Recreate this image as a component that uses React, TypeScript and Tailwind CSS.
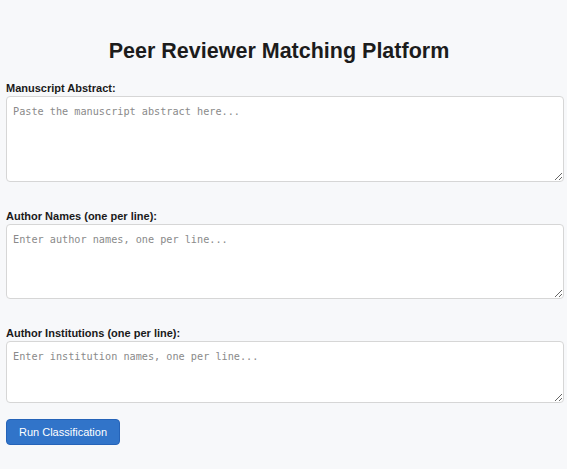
export default function App() {
  const mono = { fontFamily: '"DejaVu Sans Mono", "Liberation Mono", monospace' };
  return (
    <div className="min-h-[469px] w-full bg-[#f7f8fa] text-[#1a1a1a]" style={{ fontFamily: '"Liberation Sans", Arial, sans-serif' }}>
      <div className="pl-[6px] pr-[3px] pt-[37px]">
        <h1 className="pr-[12px] text-center text-[21.5px] font-bold leading-[28px] text-[#1c1c1c]">Peer Reviewer Matching Platform</h1>
        <label className="mt-[17px] block text-[11px] font-bold leading-[13px]">Manuscript Abstract:</label>
        <textarea
          className="mt-[1px] block h-[86px] w-full rounded-[4px] border border-[#d6d6d6] bg-white px-[6px] py-[7px] text-[10.2px] placeholder:text-[#8a8a8a]"
          style={mono}
          placeholder="Paste the manuscript abstract here..."
        />
        <label className="mt-[28px] block text-[11px] font-bold leading-[13px]">Author Names (one per line):</label>
        <textarea
          className="mt-[1px] block h-[75px] w-full rounded-[4px] border border-[#d6d6d6] bg-white px-[6px] py-[7px] text-[10.2px] placeholder:text-[#8a8a8a]"
          style={mono}
          placeholder="Enter author names, one per line..."
        />
        <label className="mt-[28px] block text-[11px] font-bold leading-[13px]">Author Institutions (one per line):</label>
        <textarea
          className="mt-[1px] block h-[62px] w-full rounded-[4px] border border-[#d6d6d6] bg-white px-[6px] py-[7px] text-[10.2px] placeholder:text-[#8a8a8a]"
          style={mono}
          placeholder="Enter institution names, one per line..."
        />
        <button className="mt-[16px] h-[26px] w-[114px] rounded-[4px] border border-[#2563b8] bg-[#3174c9] text-[11px] text-white">
          Run Classification
        </button>
      </div>
    </div>
  );
}
